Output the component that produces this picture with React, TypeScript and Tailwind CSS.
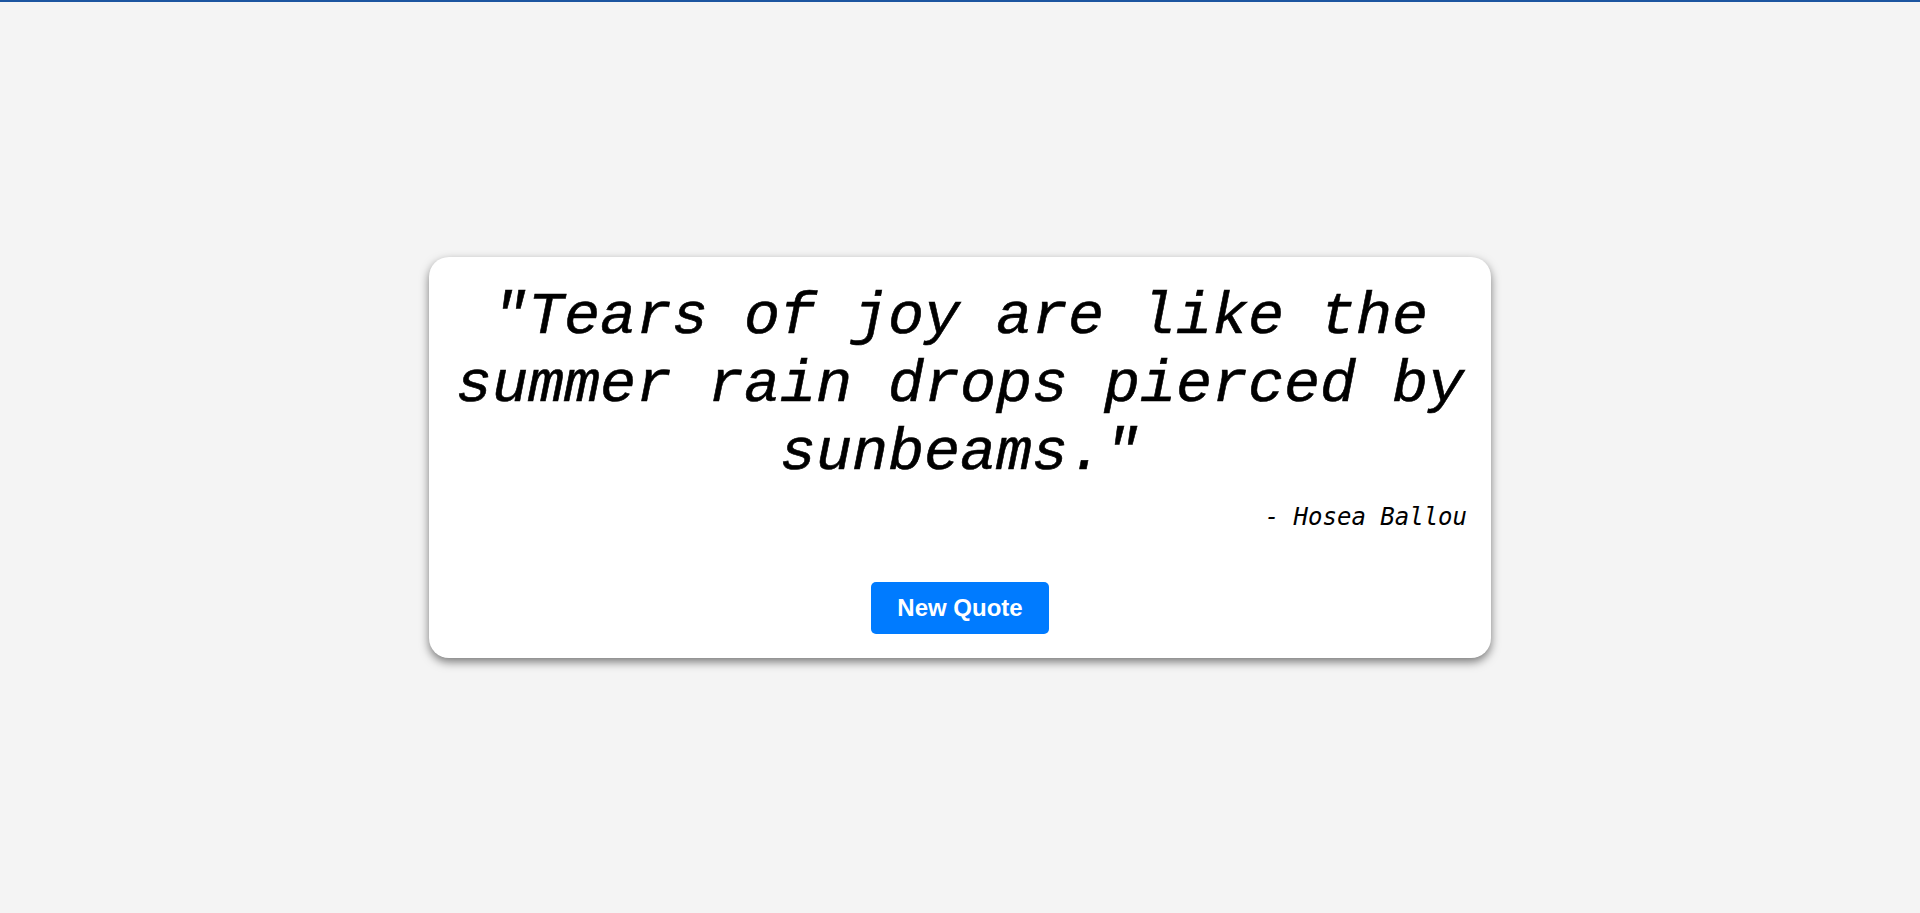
import { useState } from 'react';

const quotes = [
  { text: 'Tears of joy are like the summer rain drops pierced by sunbeams.', author: 'Hosea Ballou' },
  { text: 'The only way to do great work is to love what you do.', author: 'Steve Jobs' },
  { text: 'Simplicity is the ultimate sophistication.', author: 'Leonardo da Vinci' },
];

export default function App() {
  const [index, setIndex] = useState(0);
  const quote = quotes[index];

  return (
    <div className="h-screen box-border border-t-2 border-[#1c55a0] bg-[#f4f4f4] flex items-center justify-center">
      <div className="w-[1062px] bg-white rounded-[20px] shadow-[0_4px_10px_rgba(0,0,0,0.5)] pt-[26px] px-5 pb-[24px]">
        <p className="text-center text-black italic text-[60px] leading-[68px] [-webkit-text-stroke:0.6px_black] font-['Liberation_Mono','Courier_New',monospace]">
          "{quote.text}"
        </p>
        <p className="mt-[12px] pr-1 text-right text-black italic text-[24px] font-['DejaVu_Sans_Mono',monospace]">
          - {quote.author}
        </p>
        <div className="mt-[47px] flex justify-center">
          <button
            className="h-[52px] px-[26px] rounded-[5px] bg-[#007bff] text-white font-bold text-[24px] font-['Liberation_Sans',Arial,sans-serif]"
            onClick={() => setIndex((index + 1) % quotes.length)}
          >
            New Quote
          </button>
        </div>
      </div>
    </div>
  );
}
